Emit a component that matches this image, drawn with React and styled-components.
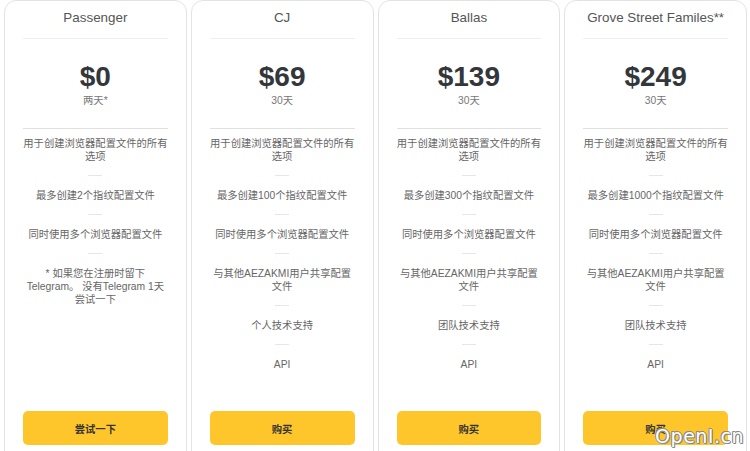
import React from "react";
import styled, { createGlobalStyle } from "styled-components";

const Global = createGlobalStyle`
  html, body { margin: 0; padding: 0; overflow: hidden; background: #fff; }
  body { font-family: "Liberation Sans", Arial, "Noto Sans CJK SC", sans-serif; }
`;

const Page = styled.div`
  position: relative;
  width: 750px;
  height: 451px;
  overflow: hidden;
  display: grid;
  grid-template-columns: repeat(4, 1fr);
  gap: 4px;
  padding: 0 3px 0 4px;
  box-sizing: border-box;
  align-items: stretch;
  align-content: start;
`;

const Card = styled.div`
  border: 1px solid #e3e3e3;
  border-radius: 12px;
  background: #fff;
  padding: 0 18px 20px;
  display: flex;
  flex-direction: column;
  box-sizing: border-box;
`;

const Title = styled.div`
  text-align: center;
  font-size: 13.4px;
  line-height: 16px;
  color: #555;
  padding: 9px 0 12px;
  border-bottom: 1px solid #efefef;
  white-space: nowrap;
`;

const PriceBlock = styled.div`
  text-align: center;
  padding: 22px 0 20px;
  border-bottom: 1px solid #e0e0e0;
`;

const Price = styled.div`
  font-size: 28px;
  line-height: 32px;
  font-weight: 700;
  color: #33363b;
`;

const Period = styled.div`
  font-size: 10.3px;
  line-height: 14px;
  color: #777;
  margin-top: 1px;
`;

const Features = styled.div`
  flex: 1;
  margin: 0 -1px;
  padding-top: 8px;
  display: flex;
  flex-direction: column;
  align-items: center;
`;

const Feature = styled.div`
  font-size: 10.3px;
  line-height: 13px;
  color: #666;
  text-align: center;
  width: 100%;
`;

const Sep = styled.div`
  width: 14px;
  height: 1px;
  background: #e6e6e6;
  margin: 12px 0 13px;
`;

const Button = styled.button`
  margin-top: 40px;
  height: 34px;
  border: none;
  border-radius: 5px;
  background: #ffc62b;
  color: #333;
  font-family: "Liberation Sans", Arial, "Noto Sans CJK SC", sans-serif;
  font-size: 10.3px;
  font-weight: 700;
  cursor: pointer;
`;

const Watermark = styled.div`
  position: absolute;
  right: 6px;
  bottom: 4px;
  font-family: "DejaVu Sans", sans-serif;
  font-size: 19px;
  color: #fff;
  letter-spacing: 0.5px;
  text-shadow: -1px 0 #8a8a8a, 1px 0 #8a8a8a, 0 -1px #8a8a8a, 0 1px #8a8a8a,
    1px 1px #8a8a8a, -1px -1px #8a8a8a;
  pointer-events: none;
`;

const common = "用于创建浏览器配置文件的所有选项";

const plans = [
  {
    name: "Passenger",
    price: "$0",
    period: "两天*",
    features: [
      common,
      "最多创建2个指纹配置文件",
      "同时使用多个浏览器配置文件",
      "* 如果您在注册时留下Telegram。 没有Telegram 1天尝试一下",
    ],
    cta: "尝试一下",
  },
  {
    name: "CJ",
    price: "$69",
    period: "30天",
    features: [
      common,
      "最多创建100个指纹配置文件",
      "同时使用多个浏览器配置文件",
      "与其他AEZAKMI用户共享配置文件",
      "个人技术支持",
      "API",
    ],
    cta: "购买",
  },
  {
    name: "Ballas",
    price: "$139",
    period: "30天",
    features: [
      common,
      "最多创建300个指纹配置文件",
      "同时使用多个浏览器配置文件",
      "与其他AEZAKMI用户共享配置文件",
      "团队技术支持",
      "API",
    ],
    cta: "购买",
  },
  {
    name: "Grove Street Familes**",
    price: "$249",
    period: "30天",
    features: [
      common,
      "最多创建1000个指纹配置文件",
      "同时使用多个浏览器配置文件",
      "与其他AEZAKMI用户共享配置文件",
      "团队技术支持",
      "API",
    ],
    cta: "购买",
  },
];

export default function App() {
  return (
    <>
      <Global />
      <Page>
        {plans.map((p) => (
          <Card key={p.name}>
            <Title>{p.name}</Title>
            <PriceBlock>
              <Price>{p.price}</Price>
              <Period>{p.period}</Period>
            </PriceBlock>
            <Features>
              {p.features.map((f, i) => (
                <React.Fragment key={i}>
                  {i > 0 && <Sep />}
                  <Feature>{f}</Feature>
                </React.Fragment>
              ))}
            </Features>
            <Button>{p.cta}</Button>
          </Card>
        ))}
        <Watermark>OpenI.cn</Watermark>
      </Page>
    </>
  );
}
